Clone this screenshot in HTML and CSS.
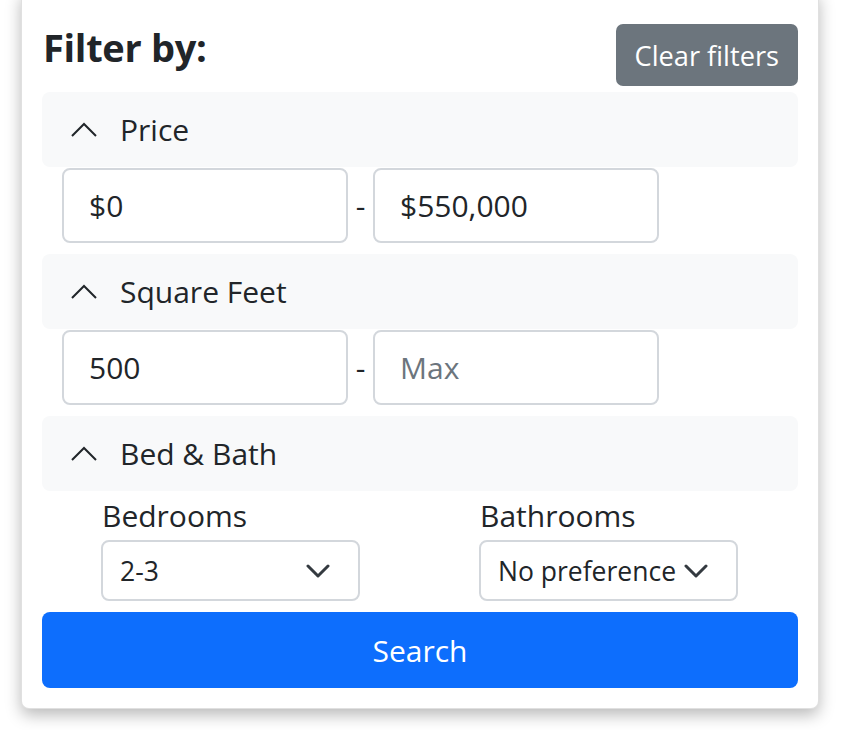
FILE: index.html
```
<!DOCTYPE html>
<html>
<head>
<meta charset="utf-8">
<link rel="stylesheet" href="styles.css">
</head>
<body>
<div class="card">
  <div class="top">
    <h3 class="title">Filter by:</h3>
    <button class="btn-clear">Clear filters</button>
  </div>
  <div class="section">
    <div class="acc-head">
      <svg class="chev-up" width="28" height="16" viewBox="0 0 28 16"><polyline points="2,14 14,2 26,14" fill="none" stroke="#212529" stroke-width="2"/></svg>
      <span>Price</span>
    </div>
    <div class="range">
      <div class="input">$0</div>
      <span class="dash">-</span>
      <div class="input">$550,000</div>
    </div>
  </div>
  <div class="section">
    <div class="acc-head">
      <svg class="chev-up" width="28" height="16" viewBox="0 0 28 16"><polyline points="2,14 14,2 26,14" fill="none" stroke="#212529" stroke-width="2"/></svg>
      <span>Square Feet</span>
    </div>
    <div class="range">
      <div class="input">500</div>
      <span class="dash">-</span>
      <div class="input placeholder">Max</div>
    </div>
  </div>
  <div class="section last">
    <div class="acc-head">
      <svg class="chev-up" width="28" height="16" viewBox="0 0 28 16"><polyline points="2,14 14,2 26,14" fill="none" stroke="#212529" stroke-width="2"/></svg>
      <span>Bed &amp; Bath</span>
    </div>
    <div class="cols">
      <div class="col">
        <div class="label">Bedrooms</div>
        <div class="select">2-3<svg class="chev-down" width="24" height="14" viewBox="0 0 24 14"><polyline points="2,2 12,12 22,2" fill="none" stroke="#343a40" stroke-width="3" stroke-linecap="round" stroke-linejoin="round"/></svg></div>
      </div>
      <div class="col">
        <div class="label">Bathrooms</div>
        <div class="select">No preference<svg class="chev-down" width="24" height="14" viewBox="0 0 24 14"><polyline points="2,2 12,12 22,2" fill="none" stroke="#343a40" stroke-width="3" stroke-linecap="round" stroke-linejoin="round"/></svg></div>
      </div>
    </div>
  </div>
  <button class="btn-search">Search</button>
</div>
</body>
</html>
```

FILE: styles.css
```
html, body {
  margin: 0;
  padding: 0;
  background: #ffffff;
}
body {
  font-family: "Open Sans", "Noto Sans", sans-serif;
  color: #212529;
  padding-bottom: 30px;
}
.card {
  box-sizing: border-box;
  width: 798px;
  margin: -10px 0 0 21px;
  padding: 33px 20px 20px 20px;
  background: #fff;
  border: 1px solid rgba(0,0,0,0.12);
  border-radius: 8px;
  box-shadow: 0 6px 16px rgba(0,0,0,0.28);
}
.top {
  display: flex;
  justify-content: space-between;
  align-items: flex-start;
  height: 62px;
  margin-bottom: 6px;
}
.title {
  margin: 4px 0 0 1px;
  font-size: 38px;
  line-height: 38px;
  font-weight: 700;
  letter-spacing: -0.3px;
}
.btn-clear {
  height: 62px;
  padding: 0 19px;
  border: none;
  border-radius: 7px;
  background: #6c757d;
  color: #fff;
  font-family: inherit;
  font-size: 27.2px;
}
.section {
  margin-bottom: 11px;
}
.acc-head {
  display: flex;
  align-items: center;
  height: 75px;
  padding-left: 28px;
  background: #f8f9fa;
  border-radius: 8px;
  font-size: 30px;
}
.chev-up {
  margin-right: 22px;
  margin-top: 1px;
}
.range {
  display: flex;
  align-items: center;
  margin-top: 1px;
  padding-left: 20px;
}
.input {
  box-sizing: border-box;
  width: 286px;
  height: 75px;
  display: flex;
  align-items: center;
  padding-left: 25px;
  border: 2px solid #d3d7dc;
  border-radius: 8px;
  font-size: 30px;
}
.placeholder {
  color: #6c757d;
}
.dash {
  width: 25px;
  text-align: center;
  font-size: 30px;
}
.cols {
  display: grid;
  grid-template-columns: 1fr 1fr;
  margin-top: 2px;
}
.col {
  padding-left: 59px;
}
.label {
  font-size: 30px;
  line-height: 45px;
  margin-left: 1px;
}
.select {
  position: relative;
  box-sizing: border-box;
  width: 259px;
  height: 61px;
  margin-top: 2px;
  display: flex;
  align-items: center;
  padding-left: 17px;
  border: 2px solid #d3d7dc;
  border-radius: 8px;
  font-size: 26.5px;
  white-space: nowrap;
}
.chev-down {
  position: absolute;
  right: 28px;
  top: 22px;
}
.btn-search {
  display: block;
  width: 100%;
  height: 76px;
  border: none;
  border-radius: 8px;
  background: #0d6efd;
  color: #fff;
  font-family: inherit;
  font-size: 30px;
}
```
